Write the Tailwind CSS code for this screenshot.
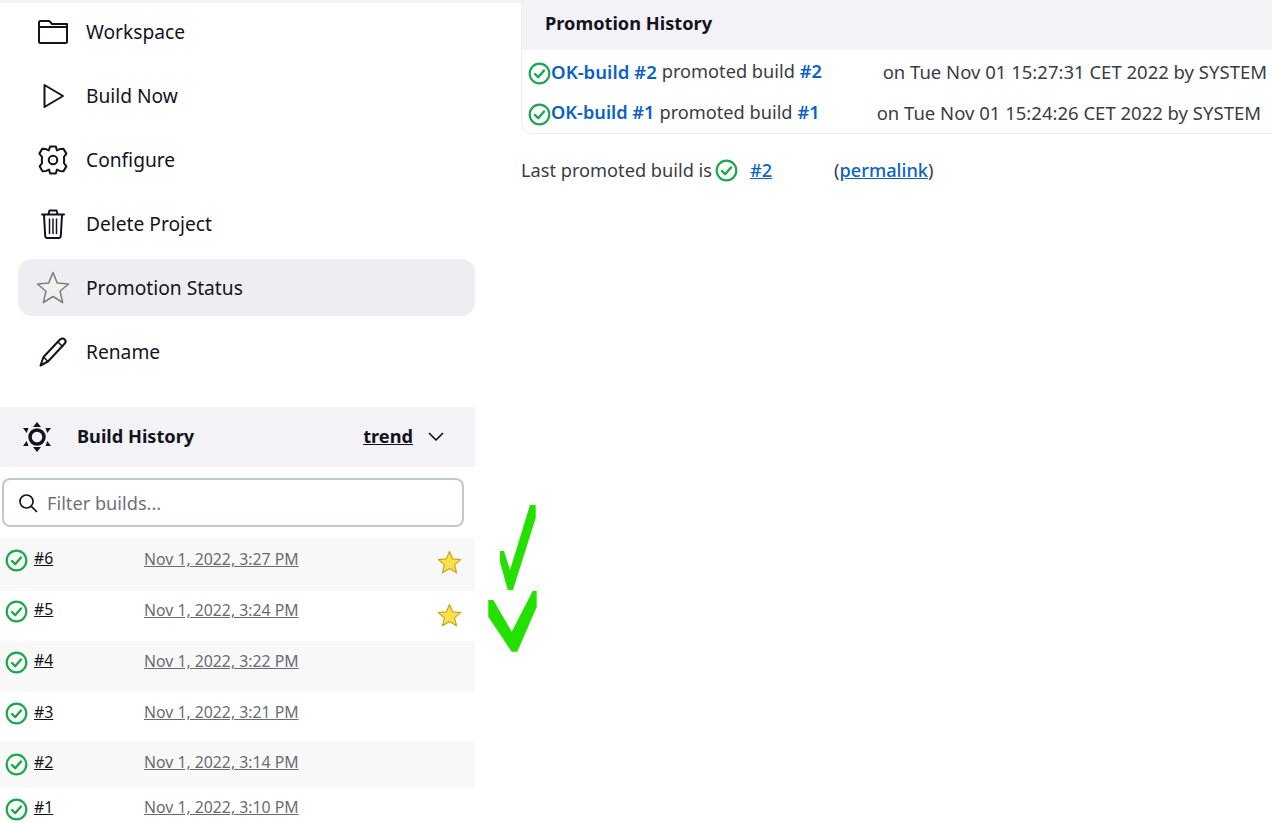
<!DOCTYPE html>
<html lang="en">
  <head>
    <meta charset="UTF-8" />
    <title>Promotion Status</title>
    <script src="https://cdn.jsdelivr.net/npm/@tailwindcss/browser@4"></script>
  </head>
  <body class="bg-white overflow-hidden font-['Noto_Sans','Open_Sans',sans-serif] text-[#14141f]">
    <div class="relative flex h-[823px] w-[1272px] overflow-hidden">
      <!-- Sidebar -->
      <aside class="w-[475px] shrink-0">
        <div class="h-[3px] w-[521px] bg-[#f2f2f7]"></div>
        <nav class="flex flex-col gap-[7px] pl-[18px] text-[19.2px]">
          <a class="flex h-[57px] items-center rounded-[14px] pl-[18px]">
            <svg class="w-[34px] h-[34px] shrink-0" viewBox="0 0 34 34" fill="none" stroke="#14141f" stroke-width="2" stroke-linejoin="round"><path d="M3 7.500c0-1 .7-1.500 1.500-1.500h8c.8 0 1.300.4 1.800 1l1.700 2h15v17.500c0 1-.6 1.500-1.500 1.500H4.500C3.600 28 3 27.500 3 26.500z"/><path d="M3 12h29"/></svg>
            <span class="ml-[16px] mt-[2px]">Workspace</span>
          </a>
          <a class="flex h-[57px] items-center rounded-[14px] pl-[18px]">
            <svg class="w-[34px] h-[34px] shrink-0" viewBox="0 0 34 34" fill="none" stroke="#14141f" stroke-width="2" stroke-linejoin="round"><path d="M8.500 6v22L27 17z"/></svg>
            <span class="ml-[16px] mt-[2px]">Build Now</span>
          </a>
          <a class="flex h-[57px] items-center rounded-[14px] pl-[18px]">
            <svg class="w-[34px] h-[34px] shrink-0" viewBox="0 0 24 24" fill="none" stroke="#14141f" stroke-width="1.450" stroke-linecap="round" stroke-linejoin="round"><path d="M10 2.500h4l.8 2.700 2-.9 2.600-.2 2 3.400-1.700 2.400.2 2.100-.2 2.100 1.700 2.400-2 3.400-2.600-.2-2-.9-.8 2.700h-4l-.8-2.700-2 .9-2.600.2-2-3.400 1.700-2.400-.2-2.100.2-2.100L2.400 7.500l2-3.400 2.600.2 2 .9z"/><circle cx="12" cy="12" r="3"/></svg>
            <span class="ml-[16px] mt-[2px]">Configure</span>
          </a>
          <a class="flex h-[57px] items-center rounded-[14px] pl-[18px]">
            <svg class="w-[34px] h-[34px] shrink-0" viewBox="0 0 34 34" fill="none" stroke="#14141f" stroke-width="2" stroke-linecap="round" stroke-linejoin="round"><path d="M6 7.500h22"/><path d="M12.500 7 13.500 3.500h7l1 3.500"/><path d="M8 8l1.200 21c.1 1.200.8 2 2 2h11.600c1.200 0 1.900-.8 2-2L26 8"/><path d="M13.500 12v14.500M17 12v14.500M20.500 12v14.500" stroke-width="1.500"/></svg>
            <span class="ml-[16px] mt-[2px]">Delete Project</span>
          </a>
          <a class="flex h-[57px] items-center rounded-[14px] pl-[18px] bg-[#eeeef2]">
            <svg class="w-[34px] h-[34px] shrink-0" viewBox="0 0 34 34"><path d="M17 1.500l4.300 10.600 11.200.9-8.500 7.300 2.700 11.200L17 25.500 7.300 31.500 10 20.300 1.500 13l11.200-.9z" fill="#f1f1ef" stroke="#7f7f7f" stroke-width="1.500" stroke-linejoin="round"/></svg>
            <span class="ml-[16px] mt-[2px]">Promotion Status</span>
          </a>
          <a class="flex h-[57px] items-center rounded-[14px] pl-[18px]">
            <svg class="w-[34px] h-[34px] shrink-0" viewBox="0 0 34 34" fill="none" stroke="#14141f" stroke-width="2" stroke-linejoin="round"><path d="M4.500 30.500 7.500 22 24 4.500c1.500-1.500 3.500-1.500 4.800 0 1.200 1.300 1 3-.3 4.300L12 26.500z"/><path d="M22 7l5 5M7.500 22l4.500 4.500" stroke-width="1.500"/></svg>
            <span class="ml-[16px] mt-[2px]">Rename</span>
          </a>
        </nav>

        <!-- Build history -->
        <section class="mt-[27px] border-t border-[#f4f4f6]">
          <div class="flex h-[59px] items-center bg-[#f2f2f7] pl-[20px] pr-[31px] pb-[1px]">
            <svg class="w-[34px] h-[34px] shrink-0" viewBox="0 0 34 34" fill="#14141f"><circle cx="17" cy="17" r="7" fill="none" stroke="#14141f" stroke-width="3.500"/><path d="M17 2l4 5h-8zM17 32l-4-5h8zM3 8h5.500l-1.800 5zM31 8h-5.500l1.800 5zM3 26l3.700-5 1.800 5zM31 26l-3.700-5-1.800 5z"/></svg>
            <h2 class="ml-[23px] flex-1 text-[18.2px] font-bold">Build History</h2>
            <a class="text-[18.2px] font-bold underline">trend</a>
            <svg class="ml-[15px] w-[16px] h-[10px]" viewBox="0 0 16 10" fill="none" stroke="#14141f" stroke-width="1.700" stroke-linecap="round" stroke-linejoin="round"><path d="M1.500 1.500 8 8l6.500-6.500"/></svg>
          </div>
          <div class="px-[2px] pt-[11px] pb-[11px]">
            <div class="flex h-[49px] w-[462px] items-center rounded-[8px] border-2 border-[#bfc8cd] pl-[14px]">
              <svg class="w-[20px] h-[20px] shrink-0" viewBox="0 0 20 20" fill="none" stroke="#14141f" stroke-width="1.700" stroke-linecap="round"><circle cx="8.500" cy="8.500" r="6.500"/><path d="M13.300 13.300 18.500 18.500"/></svg>
              <span class="ml-[9px] mt-[2px] text-[18.2px] text-[#71717a]">Filter builds...</span>
            </div>
          </div>
          <ul class="text-[15.8px]">
            <li class="relative flex h-[53px] bg-[#f8f8f8] pl-[5px] pt-[10px]">
              <svg class="w-[23px] h-[23px] shrink-0 mt-[1px]" viewBox="0 0 23 23" fill="none" stroke="#1ea64f" stroke-width="2.200" stroke-linecap="round" stroke-linejoin="round"><circle cx="11.500" cy="11.500" r="9.800"/><path d="M7 12l3.200 3.200L16 8.500" stroke-width="2.400"/></svg>
              <a class="ml-[6px] w-[110px] underline leading-[20px]">#6</a>
              <a class="underline leading-[22px] text-[#6b6b73]">Nov 1, 2022, 3:27 PM</a>
              <svg class="absolute left-[437px] top-[12px] w-[25px] h-[25px]" viewBox="0 0 25 25"><path d="M12.500 1.500l3.200 7.400 8 .7-6.100 5.300 1.900 7.900-7-4.200-7 4.200 1.900-7.900L1.300 9.600l8-.7z" fill="#fbe04a" stroke="#c9a520" stroke-width="1.200" stroke-linejoin="round"/></svg>
            </li>
            <li class="relative flex h-[50px] pl-[5px] pt-[8px]">
              <svg class="w-[23px] h-[23px] shrink-0 mt-[1px]" viewBox="0 0 23 23" fill="none" stroke="#1ea64f" stroke-width="2.200" stroke-linecap="round" stroke-linejoin="round"><circle cx="11.500" cy="11.500" r="9.800"/><path d="M7 12l3.200 3.200L16 8.500" stroke-width="2.400"/></svg>
              <a class="ml-[6px] w-[110px] underline leading-[20px]">#5</a>
              <a class="underline leading-[22px] text-[#6b6b73]">Nov 1, 2022, 3:24 PM</a>
              <svg class="absolute left-[437px] top-[12px] w-[25px] h-[25px]" viewBox="0 0 25 25"><path d="M12.500 1.500l3.200 7.400 8 .7-6.100 5.300 1.900 7.900-7-4.200-7 4.200 1.900-7.900L1.300 9.600l8-.7z" fill="#fbe04a" stroke="#c9a520" stroke-width="1.200" stroke-linejoin="round"/></svg>
            </li>
            <li class="flex h-[51px] bg-[#f8f8f8] pl-[5px] pt-[9px]">
              <svg class="w-[23px] h-[23px] shrink-0 mt-[1px]" viewBox="0 0 23 23" fill="none" stroke="#1ea64f" stroke-width="2.200" stroke-linecap="round" stroke-linejoin="round"><circle cx="11.500" cy="11.500" r="9.800"/><path d="M7 12l3.200 3.200L16 8.500" stroke-width="2.400"/></svg>
              <a class="ml-[6px] w-[110px] underline leading-[20px]">#4</a>
              <a class="underline leading-[22px] text-[#6b6b73]">Nov 1, 2022, 3:22 PM</a>
            </li>
            <li class="flex h-[50px] pl-[5px] pt-[10px]">
              <svg class="w-[23px] h-[23px] shrink-0" viewBox="0 0 23 23" fill="none" stroke="#1ea64f" stroke-width="2.200" stroke-linecap="round" stroke-linejoin="round"><circle cx="11.500" cy="11.500" r="9.800"/><path d="M7 12l3.200 3.200L16 8.500" stroke-width="2.400"/></svg>
              <a class="ml-[6px] w-[110px] underline leading-[20px]">#3</a>
              <a class="underline leading-[20px] text-[#6b6b73]">Nov 1, 2022, 3:21 PM</a>
            </li>
            <li class="flex h-[46px] bg-[#f8f8f8] pl-[5px] pt-[10px]">
              <svg class="w-[23px] h-[23px] shrink-0 mt-[1px]" viewBox="0 0 23 23" fill="none" stroke="#1ea64f" stroke-width="2.200" stroke-linecap="round" stroke-linejoin="round"><circle cx="11.500" cy="11.500" r="9.800"/><path d="M7 12l3.200 3.200L16 8.500" stroke-width="2.400"/></svg>
              <a class="ml-[6px] w-[110px] underline leading-[20px]">#2</a>
              <a class="underline leading-[20px] text-[#6b6b73]">Nov 1, 2022, 3:14 PM</a>
            </li>
            <li class="flex h-[46px] pl-[5px] pt-[9px]">
              <svg class="w-[23px] h-[23px] shrink-0 mt-[1px]" viewBox="0 0 23 23" fill="none" stroke="#1ea64f" stroke-width="2.200" stroke-linecap="round" stroke-linejoin="round"><circle cx="11.500" cy="11.500" r="9.800"/><path d="M7 12l3.200 3.200L16 8.500" stroke-width="2.400"/></svg>
              <a class="ml-[6px] w-[110px] underline leading-[20px]">#1</a>
              <a class="underline leading-[20px] text-[#6b6b73]">Nov 1, 2022, 3:10 PM</a>
            </li>
          </ul>
        </section>
      </aside>

      <!-- Main -->
      <main class="ml-[46px] flex-1 text-[18.2px] text-[#3c3c44]">
        <div class="h-[134px] rounded-bl-[12px] border-b border-l border-[#eeeef0]">
          <h2 class="flex h-[50px] items-center bg-[#f2f2f7] pl-[23px] pb-[3px] text-[18.2px] font-bold text-[#14141f]">Promotion History</h2>
          <div class="flex h-[41px] items-center pl-[6px] pr-[5px] pt-[2px]">
            <svg class="mt-[4px] w-[23px] h-[23px] shrink-0" viewBox="0 0 23 23" fill="none" stroke="#1ea64f" stroke-width="2.200" stroke-linecap="round" stroke-linejoin="round"><circle cx="11.500" cy="11.500" r="9.800"/><path d="M7 12l3.200 3.200L16 8.500" stroke-width="2.400"/></svg>
            <a class="text-[18.6px] font-semibold text-[#0b62c4]">OK-build #2</a>
            <span class="ml-[5px]">promoted build</span>
            <a class="ml-[5px] font-semibold text-[#0b62c4]">#2</a>
            <span class="ml-auto text-[18.5px]">on Tue Nov 01 15:27:31 CET 2022 by SYSTEM</span>
          </div>
          <div class="flex h-[41px] items-center pl-[6px] pr-[11px] pt-[2px]">
            <svg class="mt-[4px] w-[23px] h-[23px] shrink-0" viewBox="0 0 23 23" fill="none" stroke="#1ea64f" stroke-width="2.200" stroke-linecap="round" stroke-linejoin="round"><circle cx="11.500" cy="11.500" r="9.800"/><path d="M7 12l3.200 3.200L16 8.500" stroke-width="2.400"/></svg>
            <a class="font-semibold text-[#0b62c4]">OK-build #1</a>
            <span class="ml-[5px]">promoted build</span>
            <a class="ml-[5px] font-semibold text-[#0b62c4]">#1</a>
            <span class="ml-auto text-[18.5px]">on Tue Nov 01 15:24:26 CET 2022 by SYSTEM</span>
          </div>
        </div>
        <p class="mt-[23px] flex items-center h-[28px]">
          <span>Last promoted build is</span>
          <svg class="ml-[3px] mb-[2px] w-[23px] h-[23px] shrink-0" viewBox="0 0 23 23" fill="none" stroke="#1ea64f" stroke-width="2.200" stroke-linecap="round" stroke-linejoin="round"><circle cx="11.500" cy="11.500" r="9.800"/><path d="M7 12l3.200 3.200L16 8.500" stroke-width="2.400"/></svg>
          <a class="ml-[12px] font-medium text-[#0b62c4] underline">#2</a>
          <span class="ml-[62px]">(<a class="font-medium text-[#0b62c4] underline">permalink</a>)</span>
        </p>
      </main>

      <!-- Hand-drawn check marks over the screenshot -->
      <svg class="absolute left-[480px] top-[495px] w-[70px] h-[165px]" viewBox="0 0 70 165" fill="#24e000">
        <polygon points="50,10 55.700,10 55.700,23 33,95 27.700,95 20,67 20,56 24,56 30,75"/>
        <polygon points="52.700,96 56.700,96 56.700,112 37.300,156.700 31.700,156.700 8.300,121.700 8.300,105 13.300,105 31.700,136.700"/>
      </svg>
    </div>
  </body>
</html>
